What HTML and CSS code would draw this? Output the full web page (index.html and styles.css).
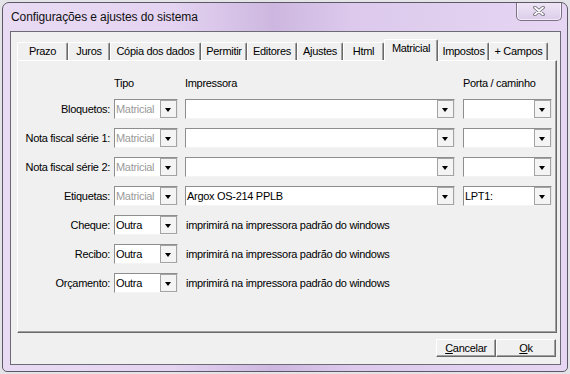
FILE: index.html
```html
<!DOCTYPE html>
<html lang="pt">
<head>
    <meta charset="UTF-8">
    <meta name="viewport" content="width=device-width, initial-scale=1.0">
    <link rel="stylesheet" href="styles.css">
    <title>Configurações e ajustes do sistema</title>
</head>
<body>
    <div class="window">
        <div class="titlebar">
            <span class="title">Configurações e ajustes do sistema</span>
            <div class="close">
                <svg width="14" height="10" viewBox="0 0 14 10">
                    <path d="M3 1.5 L11 8.5 M11 1.5 L3 8.5" stroke="#6f6a75" stroke-width="3.6" stroke-linecap="round"/>
                    <path d="M3 1.5 L11 8.5 M11 1.5 L3 8.5" stroke="#fbfbfd" stroke-width="1.8" stroke-linecap="round"/>
                </svg>
            </div>
        </div>
        <div class="client">
            <div class="tabs">
                <span class="tab w-prazo">Prazo</span>
                <span class="tab w-juros">Juros</span>
                <span class="tab w-copia">Cópia dos dados</span>
                <span class="tab w-permitir">Permitir</span>
                <span class="tab w-editores">Editores</span>
                <span class="tab w-ajustes">Ajustes</span>
                <span class="tab w-html">Html</span>
                <span class="tab active w-matricial">Matricial</span>
                <span class="tab w-impostos">Impostos</span>
                <span class="tab w-campos">+ Campos</span>
            </div>
            <div class="panel">
                <div class="grid">
                    <span class="lbl"></span>
                    <span class="head c-tipo">Tipo</span>
                    <span class="head c-imp">Impressora</span>
                    <span class="head c-porta">Porta / caminho</span>

                    <label class="lbl">Bloquetos:</label>
                    <div class="combo c-tipo disabled"><span class="val">Matricial</span><span class="btn"></span></div>
                    <div class="combo c-imp"><span class="val"></span><span class="btn"></span></div>
                    <div class="combo c-porta"><span class="val"></span><span class="btn"></span></div>

                    <label class="lbl">Nota fiscal série 1:</label>
                    <div class="combo c-tipo disabled"><span class="val">Matricial</span><span class="btn"></span></div>
                    <div class="combo c-imp"><span class="val"></span><span class="btn"></span></div>
                    <div class="combo c-porta"><span class="val"></span><span class="btn"></span></div>

                    <label class="lbl">Nota fiscal série 2:</label>
                    <div class="combo c-tipo disabled"><span class="val">Matricial</span><span class="btn"></span></div>
                    <div class="combo c-imp"><span class="val"></span><span class="btn"></span></div>
                    <div class="combo c-porta"><span class="val"></span><span class="btn"></span></div>

                    <label class="lbl">Etiquetas:</label>
                    <div class="combo c-tipo disabled"><span class="val">Matricial</span><span class="btn"></span></div>
                    <div class="combo c-imp"><span class="val">Argox OS-214 PPLB</span><span class="btn"></span></div>
                    <div class="combo c-porta"><span class="val">LPT1:</span><span class="btn"></span></div>

                    <label class="lbl">Cheque:</label>
                    <div class="combo c-tipo"><span class="val">Outra</span><span class="btn"></span></div>
                    <span class="note">imprimirá na impressora padrão do windows</span>

                    <label class="lbl">Recibo:</label>
                    <div class="combo c-tipo"><span class="val">Outra</span><span class="btn"></span></div>
                    <span class="note">imprimirá na impressora padrão do windows</span>

                    <label class="lbl">Orçamento:</label>
                    <div class="combo c-tipo"><span class="val">Outra</span><span class="btn"></span></div>
                    <span class="note">imprimirá na impressora padrão do windows</span>
                </div>
            </div>
            <div class="buttons">
                <button class="pushbtn"><u>C</u>ancelar</button>
                <button class="pushbtn"><u>O</u>k</button>
            </div>
        </div>
    </div>
</body>
</html>
```

FILE: styles.css
```css
*{
    box-sizing: border-box;
}
body{
    margin: 0;
    padding: 2px;
    background: #e4e4e8;
    font-family: "Liberation Sans", Arial, sans-serif;
    font-size: 11px;
    letter-spacing: -0.3px;
    color: #000;
}
.window{
    width: 566px;
    height: 370px;
    border: 1px solid #5d5866;
    border-radius: 7px 7px 5px 5px;
    background: linear-gradient(90deg, #e9dbf4 0%, #e4d3f1 30%, #cdb7e0 48%, #dcc9ec 62%, #e6d6f3 100%);
    overflow: hidden;
}
.titlebar{
    height: 28px;
    display: flex;
    align-items: center;
    padding-left: 8px;
}
.title{
    font-size: 12px;
    letter-spacing: -0.1px;
    color: #111;
}
.close{
    margin-left: auto;
    margin-right: 5px;
    align-self: flex-start;
    margin-top: -1px;
    width: 46px;
    height: 19px;
    border: 1px solid #7c7287;
    border-top: none;
    border-radius: 0 0 5px 5px;
    background: linear-gradient(#efe6f6, #dccdea);
    box-shadow: inset 0 0 0 1px rgba(255,255,255,0.6);
    display: flex;
    align-items: center;
    justify-content: center;
}
.client{
    margin: 0 6px 0 7px;
    height: 334px;
    border: 1px solid #6c6a74;
    background: #f0f0f0;
    padding-top: 7px;
}
.tabs{
    display: flex;
    align-items: flex-end;
    height: 21px;
    margin-left: 6px;
}
.tab{
    height: 18px;
    line-height: 17px;
    text-align: center;
    border-top: 1px solid #fff;
    border-left: 1px solid #fff;
    border-right: 1px solid #696969;
    box-shadow: inset -1px 0 0 #a0a0a0;
    border-radius: 2px 2px 0 0;
    white-space: nowrap;
}
.tab.active{
    height: 22px;
    line-height: 16px;
    margin-bottom: -1px;
    background: #f0f0f0;
    position: relative;
}
.w-prazo{ width: 51px; }
.w-juros{ width: 42px; }
.w-copia{ width: 91px; }
.w-permitir{ width: 46px; }
.w-editores{ width: 50px; }
.w-ajustes{ width: 46px; }
.w-html{ width: 41px; }
.w-matricial{ width: 54px; }
.w-impostos{ width: 51px; }
.w-campos{ width: 59px; }

.panel{
    margin-left: 6px;
    margin-right: 3px;
    height: 273px;
    border-top: 1px solid #fff;
    border-left: 1px solid #fff;
    border-right: 1px solid #696969;
    border-bottom: 1px solid #696969;
    box-shadow: inset -1px -1px 0 #a0a0a0;
    padding-top: 14px;
}
.grid{
    display: grid;
    grid-template-columns: 92px 4px 64px 7px 270px 8px 89px;
    grid-template-rows: 16px repeat(7, 21px);
    row-gap: 8px;
}
.lbl{ grid-column: 1; }
.c-tipo{ grid-column: 3; }
.c-imp{ grid-column: 5; }
.c-porta{ grid-column: 7; }
.head{
    align-self: end;
    line-height: 16px;
}
.lbl{
    text-align: right;
    line-height: 20px;
    white-space: nowrap;
}
.combo{
    display: flex;
    height: 20px;
    background: #fff;
    border: 1px solid;
    border-color: #8e8e8e #e6e6e6 #f4f4f4 #8e8e8e;
}
.val{
    flex: 1;
    line-height: 18px;
    padding-left: 1px;
    white-space: nowrap;
    overflow: hidden;
}
.combo.disabled .val{
    color: #9b9b9b;
}
.btn{
    width: 17px;
    height: 18px;
    border: 1px solid #a3a3a3;
    background: #f4f4f4;
    position: relative;
}
.btn::after{
    content: "";
    position: absolute;
    left: 4px;
    top: 7px;
    border-left: 3.5px solid transparent;
    border-right: 3.5px solid transparent;
    border-top: 4px solid #000;
}
.note{
    grid-column: 5 / span 3;
    margin-left: 1px;
    line-height: 20px;
    white-space: nowrap;
}
.buttons{
    display: flex;
    justify-content: flex-end;
    margin-top: 6px;
    padding-right: 4px;
}
.pushbtn{
    width: 60px;
    height: 18px;
    padding: 0;
    font-family: "Liberation Sans", Arial, sans-serif;
    font-size: 11px;
    letter-spacing: -0.3px;
    color: #000;
    background: #f0f0f0;
    border: 1px solid;
    border-color: #fff #696969 #696969 #fff;
    box-shadow: inset -1px -1px 0 #a0a0a0;
    border-radius: 0;
}
```
